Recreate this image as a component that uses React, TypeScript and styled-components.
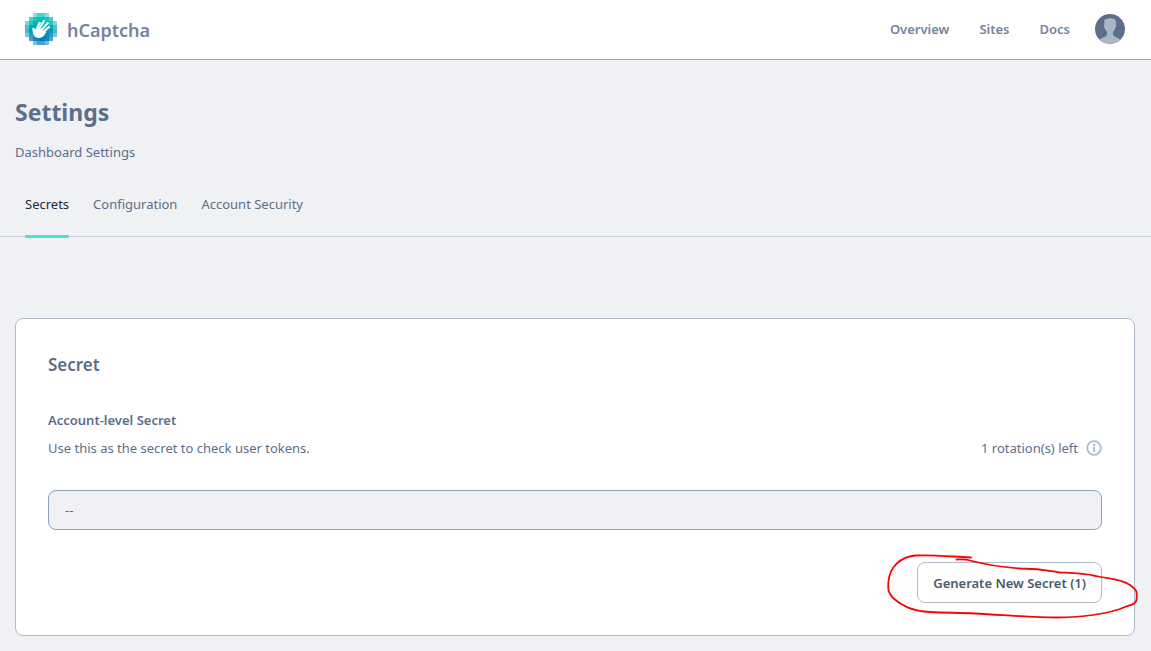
import React from "react";
import styled, { createGlobalStyle } from "styled-components";

const GlobalStyle = createGlobalStyle`
  *, *::before, *::after { box-sizing: border-box; }
  body {
    margin: 0;
    background: #eff1f5;
    color: #5c6f8a;
    font-family: "Segoe UI", "Noto Sans", "Open Sans", sans-serif;
    font-size: 13px;
    line-height: 20px;
  }
  h1, h2, h3, p { margin: 0; }
  a { color: inherit; text-decoration: none; }
`;

const Header = styled.header`
  display: flex;
  align-items: center;
  justify-content: space-between;
  height: 60px;
  padding: 0 26px 1px 25px;
  background: #fff;
  border-bottom: 1px solid #8fa1b8;
`;

const Brand = styled.a`
  display: flex;
  align-items: center;
  gap: 10px;
  color: #74849f;
  font-size: 18px;
  font-weight: 600;
`;

const BrandName = styled.span`
  padding-top: 2px;
`;

const Nav = styled.nav`
  display: flex;
  align-items: center;
  gap: 30px;
  color: #74849f;
  font-weight: 600;
`;

const AccountButton = styled.button`
  display: flex;
  margin: 0 0 0 -5px;
  padding: 0;
  border: 0;
  border-radius: 50%;
  background: none;
`;

const Intro = styled.section`
  padding: 35px 15px 0;
`;

const Title = styled.h1`
  font-size: 23px;
  font-weight: 700;
  line-height: 34px;
`;

const Subtitle = styled.p`
  margin-top: 13px;
`;

const Tabs = styled.nav`
  display: flex;
  gap: 24px;
  margin-top: 32px;
  padding: 0 25px;
  border-bottom: 1px solid #cbd5e0;
`;

const Tab = styled.a<{ $active?: boolean }>`
  display: block;
  margin-bottom: -2px;
  color: ${(p) => (p.$active ? "#1f2b3d" : "inherit")};

  &::after {
    content: "";
    display: block;
    height: 3px;
    margin-top: 21px;
    border-radius: 1px;
    background: ${(p) => (p.$active ? "#4de1d2" : "transparent")};
  }
`;

const Card = styled.section`
  margin: 81px 16px 15px 15px;
  padding: 32px;
  border: 1px solid #b0bccb;
  border-radius: 8px;
  background: #fff;
`;

const CardTitle = styled.h2`
  font-size: 17px;
  font-weight: 600;
  line-height: 27px;
`;

const FieldLabel = styled.label`
  display: block;
  margin-top: 32px;
  font-weight: 600;
`;

const HintRow = styled.div`
  display: flex;
  justify-content: space-between;
  margin-top: 8px;
`;

const Rotations = styled.span`
  display: flex;
  align-items: center;
  gap: 8px;
`;

const SecretInput = styled.input`
  display: block;
  width: 100%;
  height: 40px;
  margin-top: 32px;
  padding: 0 16px;
  border: 1px solid #8fa1b8;
  border-radius: 8px;
  background: #eff1f5;
  color: inherit;
  font: inherit;
`;

const Actions = styled.div`
  display: flex;
  justify-content: flex-end;
  margin-top: 32px;
`;

const Marked = styled.div`
  position: relative;
`;

const GenerateButton = styled.button`
  display: block;
  height: 41px;
  padding: 0 15px;
  border: 1px solid #b0bccb;
  border-radius: 8px;
  background: #fff;
  color: #4a5a70;
  font: inherit;
  font-weight: 600;
`;

const Scribble = styled.svg`
  position: absolute;
  right: -40px;
  top: -12px;
  width: 260px;
  height: 72px;
  pointer-events: none;
`;

const logoRows = [
  { y: 0, x: 8, colors: ["#84dfd8", "#4cd5cb", "#4cd5cb", "#84dfd8"] },
  { y: 4, x: 4, colors: ["#4fcfcb", "#1cc6bd", "#00bfb5", "#00bfb5", "#1cc6bd", "#4fcfcb"] },
  { y: 8, x: 0, colors: ["#82d4da", "#2fbfc5", "#00b5b9", "#00b5b9", "#00b5b9", "#00b5b9", "#2fbfc5", "#82d4da"] },
  { y: 12, x: 0, colors: ["#4fc0d0", "#00a9ba", "#00a9ba", "#00a9ba", "#00a9ba", "#00a9ba", "#00a9ba", "#4fc0d0"] },
  { y: 16, x: 0, colors: ["#4db4d2", "#009cbc", "#009cbc", "#009cbc", "#009cbc", "#009cbc", "#009cbc", "#4db4d2"] },
  { y: 20, x: 0, colors: ["#80bfdf", "#2f9bcb", "#008fbf", "#008fbf", "#008fbf", "#008fbf", "#2f9bcb", "#80bfdf"] },
  { y: 24, x: 4, colors: ["#4d9fd2", "#1a83c6", "#0080bf", "#0080bf", "#1a83c6", "#4d9fd2"] },
  { y: 28, x: 8, colors: ["#80b9df", "#4d9ed2", "#4d9ed2", "#80b9df"] },
];

const Logo = () => (
  <svg width="32" height="32" viewBox="0 0 32 32" aria-hidden="true">
    <g shapeRendering="crispEdges">
      {logoRows.map((row) =>
        row.colors.map((fill, i) => (
          <rect key={`${row.y}-${i}`} x={row.x + i * 4} y={row.y} width="4" height="4" fill={fill} />
        ))
      )}
    </g>
    <g fill="none" stroke="#fff" strokeWidth="2.2" strokeLinecap="round">
      <path d="M8.4 15.6 10.4 19" />
      <path d="M11.4 17 14.6 9.8" />
      <path d="M13.6 16.5 19 8" />
      <path d="M15.8 17.8 22.8 10" />
      <path d="M17.5 19.6 24 14" />
    </g>
    <path
      fill="#fff"
      d="M7.4 16 C8 20 8 22.5 10.5 24 C13.5 25.8 17 24.9 19 22.4 L21.5 18.8 L18 18 L17 16 L14.2 15.4 L12.2 14 L10.8 17.2 Z"
    />
  </svg>
);

const Avatar = () => (
  <svg width="30" height="30" viewBox="0 0 30 30" aria-hidden="true">
    <defs>
      <clipPath id="avatar-clip">
        <circle cx="15" cy="15" r="15" />
      </clipPath>
    </defs>
    <g clipPath="url(#avatar-clip)">
      <rect width="30" height="30" fill="#5c6f8a" />
      <path
        fill="#aab5c5"
        d="M9.3 8.2 C9 5.5 10.6 5 11.6 5 C13 3.9 18.6 3.8 20 5.6 C21.4 6.6 20.9 9 20.8 10.7 C21.7 10.8 21.2 13.7 20.2 14 C19.8 16 18.8 17.2 18 18.1 L18.1 21 C19.2 23.3 24.6 23.6 26 27 L26 30 H4 V27 C5.4 23.6 10.8 23.3 11.9 21 L12 18.1 C11.2 17.2 10.2 16 9.8 14 C8.8 13.7 8.3 10.8 9.3 10.7 Z"
      />
    </g>
  </svg>
);

const InfoIcon = () => (
  <svg width="16" height="16" viewBox="0 0 16 16" role="img" aria-label="Info">
    <circle cx="8" cy="8" r="6.8" fill="none" stroke="#afbccb" strokeWidth="1.8" />
    <rect x="7" y="4" width="2" height="2" fill="#afbccb" />
    <rect x="7" y="7" width="2" height="5" fill="#afbccb" />
  </svg>
);

export default function App() {
  return (
    <>
      <GlobalStyle />
      <Header>
        <Brand href="#">
          <Logo />
          <BrandName>hCaptcha</BrandName>
        </Brand>
        <Nav>
          <a href="#overview">Overview</a>
          <a href="#sites">Sites</a>
          <a href="#docs">Docs</a>
          <AccountButton type="button" aria-label="Account">
            <Avatar />
          </AccountButton>
        </Nav>
      </Header>
      <main>
        <Intro>
          <Title>Settings</Title>
          <Subtitle>Dashboard Settings</Subtitle>
        </Intro>
        <Tabs>
          <Tab href="#secrets" $active>Secrets</Tab>
          <Tab href="#configuration">Configuration</Tab>
          <Tab href="#security">Account Security</Tab>
        </Tabs>
        <Card>
          <CardTitle>Secret</CardTitle>
          <FieldLabel htmlFor="secret">Account-level Secret</FieldLabel>
          <HintRow>
            <p>Use this as the secret to check user tokens.</p>
            <Rotations>
              1 rotation(s) left
              <InfoIcon />
            </Rotations>
          </HintRow>
          <SecretInput id="secret" defaultValue="--" readOnly />
          <Actions>
            <Marked>
              <GenerateButton type="button">Generate New Secret (1)</GenerateButton>
              <Scribble viewBox="882 550 260 72" aria-hidden="true">
                <path
                  fill="none"
                  stroke="#f50505"
                  strokeWidth="1.8"
                  strokeLinecap="round"
                  strokeLinejoin="round"
                  d="M971 557.5 C950 556.5 930 554.5 915 555.5 C900 557 890 567 888.5 581 C887.5 592 889 593 893 598 C902 606 912 611 930 612 C945 613 960 612.5 975 613.5 C1005 615 1030 617.5 1058 617.5 C1085 617 1105 614 1120 609 C1128 605 1136 605 1136.5 600 C1137 592 1138 591 1130 585 C1120 578 1108 579 1096 576 C1082 573 1070 573 1060 572.5 C1048 570.5 1040 568.5 1020 568.5 C1000 567 985 564.5 970 560.5 C966 559 962 559.5 956.5 559.5"
                />
              </Scribble>
            </Marked>
          </Actions>
        </Card>
      </main>
    </>
  );
}
